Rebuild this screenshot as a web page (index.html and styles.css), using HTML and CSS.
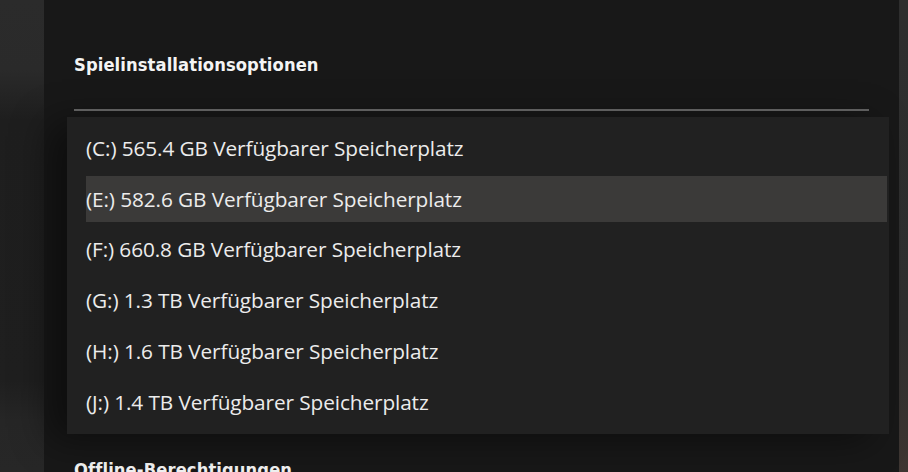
FILE: index.html
```html
<!DOCTYPE html>
<html lang="de">
<head>
<meta charset="utf-8">
<link rel="stylesheet" href="styles.css">
</head>
<body>
<div class="app">
  <div class="side-left"></div>
  <main class="panel">
    <h2 class="section-title">Spielinstallationsoptionen</h2>
    <div class="divider"></div>
    <ul class="dropdown">
      <li class="option">(C:) 565.4 GB Verfügbarer Speicherplatz</li>
      <li class="option selected">(E:) 582.6 GB Verfügbarer Speicherplatz</li>
      <li class="option">(F:) 660.8 GB Verfügbarer Speicherplatz</li>
      <li class="option">(G:) 1.3 TB Verfügbarer Speicherplatz</li>
      <li class="option">(H:) 1.6 TB Verfügbarer Speicherplatz</li>
      <li class="option">(J:) 1.4 TB Verfügbarer Speicherplatz</li>
    </ul>
    <h2 class="section-title next">Offline-Berechtigungen</h2>
  </main>
  <div class="side-right"></div>
</div>
</body>
</html>
```
FILE: styles.css
```css
* { box-sizing: border-box; }
html, body {
  margin: 0;
  padding: 0;
  width: 908px;
  height: 472px;
  overflow: hidden;
  background: #282828;
}
.app {
  display: flex;
  height: 472px;
}
.side-left {
  width: 44px;
  flex: none;
  background: linear-gradient(180deg, #2b2b2b 0px, #2a2a2a 70px, #1e1e1e 120px, #1f1f1f 380px, #262626 420px, #272727 472px);
}
.side-right {
  width: 9px;
  flex: none;
  background: linear-gradient(180deg, #2e2e2e 0%, #2f2f2f 70%, #3e3632 100%);
}
.panel {
  flex: 1;
  min-width: 0;
  background: #181818;
  padding: 0 0 0 23px;
  display: flex;
  flex-direction: column;
  font-family: "Open Sans", "Noto Sans", sans-serif;
  color: #ececec;
}
.section-title {
  flex: none;
  margin: 53px 0 0 7px;
  font-family: "DejaVu Sans Condensed", "DejaVu Sans", sans-serif;
  font-weight: bold;
  font-size: 18.2px;
  line-height: 24px;
  color: #f4f4f4;
  letter-spacing: 0.1px;
  white-space: nowrap;
}
.divider {
  flex: none;
  position: relative;
  z-index: 2;
  margin: 32px 0 0 7px;
  width: 795px;
  height: 2px;
  background: #5e5e5e;
}
.dropdown {
  flex: none;
  position: relative;
  z-index: 1;
  list-style: none;
  margin: 6px 0 0 0;
  padding: 5px 2px 7px 2px;
  width: 822px;
  background: #212121;
  box-shadow: -18px 6px 36px rgba(0,0,0,0.45);
}
.option {
  height: 51px;
  padding: 0 0 0 17px;
  display: flex;
  align-items: center;
  font-size: 20.8px;
  color: #ececec;
  letter-spacing: -0.1px;
  white-space: nowrap;
}
.option.selected {
  padding-top: 3px;
  padding-bottom: 2px;
  background: linear-gradient(#3b3a39, #3b3a39) content-box;
}
.option:nth-child(n+3) {
  height: 50.8px;
}
.section-title.next {
  margin-top: 24px;
}
```
